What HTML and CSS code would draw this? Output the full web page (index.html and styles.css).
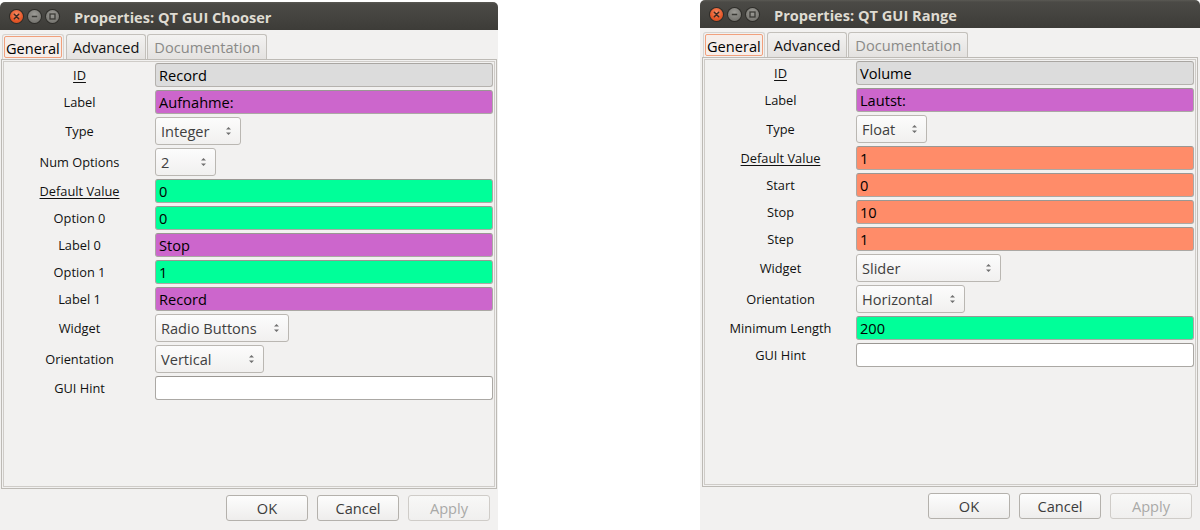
FILE: index.html
```html
<!DOCTYPE html>
<html>
<head>
<meta charset="utf-8">
<link rel="stylesheet" href="styles.css">
</head>
<body>
<div class="desk">
  <div class="win win-left">
    <div class="titlebar">
      <div class="wbtns">
        <span class="wb close"><svg width="13" height="13" viewBox="0 0 13 13"><path d="M4.3 4.3 L8.7 8.7 M8.7 4.3 L4.3 8.7" stroke="#3a2a22" stroke-width="1.5" stroke-linecap="round"/></svg></span>
        <span class="wb min"><svg width="13" height="13" viewBox="0 0 13 13"><path d="M3.8 6.5 H9.2" stroke="#3a3935" stroke-width="1.6"/></svg></span>
        <span class="wb max"><svg width="13" height="13" viewBox="0 0 13 13"><rect x="4" y="4" width="5" height="5" fill="none" stroke="#3a3935" stroke-width="1.3"/></svg></span>
      </div>
      <div class="wtitle">Properties: QT GUI Chooser</div>
    </div>
    <div class="wbody">
      <div class="tabs">
        <div class="tab sel"><span class="tab-focus">General</span></div>
        <div class="tab">Advanced</div>
        <div class="tab dis">Documentation</div>
      </div>
      <div class="panel">
        <div class="panel-in">
          <div class="form">
            <div class="lbl"><u>ID</u></div><div class="field f-id">Record</div>
            <div class="lbl">Label</div><div class="field f-str">Aufnahme:</div>
            <div class="lbl">Type</div><div class="combo w86">Integer<span class="arr"><svg width="7" height="10" viewBox="0 0 7 10"><path d="M1 3.5 L3.5 1 L6 3.5 Z M1 6.5 L3.5 9 L6 6.5 Z" fill="#707070"/></svg></span></div>
            <div class="lbl">Num Options</div><div class="combo w61">2<span class="arr"><svg width="7" height="10" viewBox="0 0 7 10"><path d="M1 3.5 L3.5 1 L6 3.5 Z M1 6.5 L3.5 9 L6 6.5 Z" fill="#707070"/></svg></span></div>
            <div class="lbl"><u>Default Value</u></div><div class="field f-int">0</div>
            <div class="lbl">Option 0</div><div class="field f-int">0</div>
            <div class="lbl">Label 0</div><div class="field f-str">Stop</div>
            <div class="lbl">Option 1</div><div class="field f-int">1</div>
            <div class="lbl">Label 1</div><div class="field f-str">Record</div>
            <div class="lbl">Widget</div><div class="combo w134">Radio Buttons<span class="arr"><svg width="7" height="10" viewBox="0 0 7 10"><path d="M1 3.5 L3.5 1 L6 3.5 Z M1 6.5 L3.5 9 L6 6.5 Z" fill="#707070"/></svg></span></div>
            <div class="lbl">Orientation</div><div class="combo w109">Vertical<span class="arr"><svg width="7" height="10" viewBox="0 0 7 10"><path d="M1 3.5 L3.5 1 L6 3.5 Z M1 6.5 L3.5 9 L6 6.5 Z" fill="#707070"/></svg></span></div>
            <div class="lbl">GUI Hint</div><div class="field f-none"></div>
          </div>
        </div>
      </div>
      <div class="actions">
        <div class="btn">OK</div>
        <div class="btn">Cancel</div>
        <div class="btn dis">Apply</div>
      </div>
    </div>
  </div>

  <div class="win win-right">
    <div class="titlebar">
      <div class="wbtns">
        <span class="wb close"><svg width="13" height="13" viewBox="0 0 13 13"><path d="M4.3 4.3 L8.7 8.7 M8.7 4.3 L4.3 8.7" stroke="#3a2a22" stroke-width="1.5" stroke-linecap="round"/></svg></span>
        <span class="wb min"><svg width="13" height="13" viewBox="0 0 13 13"><path d="M3.8 6.5 H9.2" stroke="#3a3935" stroke-width="1.6"/></svg></span>
        <span class="wb max"><svg width="13" height="13" viewBox="0 0 13 13"><rect x="4" y="4" width="5" height="5" fill="none" stroke="#3a3935" stroke-width="1.3"/></svg></span>
      </div>
      <div class="wtitle">Properties: QT GUI Range</div>
    </div>
    <div class="wbody">
      <div class="tabs">
        <div class="tab sel"><span class="tab-focus">General</span></div>
        <div class="tab">Advanced</div>
        <div class="tab dis">Documentation</div>
      </div>
      <div class="panel">
        <div class="panel-in">
          <div class="form">
            <div class="lbl"><u>ID</u></div><div class="field f-id">Volume</div>
            <div class="lbl">Label</div><div class="field f-str">Lautst:</div>
            <div class="lbl">Type</div><div class="combo w71">Float<span class="arr"><svg width="7" height="10" viewBox="0 0 7 10"><path d="M1 3.5 L3.5 1 L6 3.5 Z M1 6.5 L3.5 9 L6 6.5 Z" fill="#707070"/></svg></span></div>
            <div class="lbl"><u>Default Value</u></div><div class="field f-float">1</div>
            <div class="lbl">Start</div><div class="field f-float">0</div>
            <div class="lbl">Stop</div><div class="field f-float">10</div>
            <div class="lbl">Step</div><div class="field f-float">1</div>
            <div class="lbl">Widget</div><div class="combo w145">Slider<span class="arr"><svg width="7" height="10" viewBox="0 0 7 10"><path d="M1 3.5 L3.5 1 L6 3.5 Z M1 6.5 L3.5 9 L6 6.5 Z" fill="#707070"/></svg></span></div>
            <div class="lbl">Orientation</div><div class="combo w109">Horizontal<span class="arr"><svg width="7" height="10" viewBox="0 0 7 10"><path d="M1 3.5 L3.5 1 L6 3.5 Z M1 6.5 L3.5 9 L6 6.5 Z" fill="#707070"/></svg></span></div>
            <div class="lbl">Minimum Length</div><div class="field f-int">200</div>
            <div class="lbl">GUI Hint</div><div class="field f-none"></div>
          </div>
        </div>
      </div>
      <div class="actions">
        <div class="btn">OK</div>
        <div class="btn">Cancel</div>
        <div class="btn dis">Apply</div>
      </div>
    </div>
  </div>
</div>
</body>
</html>
```

FILE: styles.css
```css
* { box-sizing: border-box; margin: 0; padding: 0; }
html, body { width: 1200px; height: 530px; overflow: hidden; background: #ffffff; }
body { font-family: "Open Sans", "DejaVu Sans", sans-serif; color: #000; }

.desk { display: flex; align-items: flex-start; gap: 202px; height: 530px; }

.win { background: #f2f1f0; display: flex; flex-direction: column; border-radius: 5px 5px 0 0; overflow: hidden; }
.win-left { width: 498px; height: 528px; margin-top: 2px; }
.win-right { width: 500px; height: 530px; }

.titlebar {
  height: 28px; flex: none; display: flex; align-items: center;
  background: linear-gradient(to bottom, #5a5954 0, #4b4a46 2px, #3d3c38 100%);
  padding-left: 10px;
}
.wbtns { display: flex; gap: 5px; width: 64px; flex: none; }
.wb { width: 13px; height: 13px; border-radius: 50%; display: block; }
.wb svg { display: block; }
.close { background: radial-gradient(circle at 50% 35%, #f7906a 0, #e8592a 55%, #c9461a 100%); box-shadow: 0 0 0 1px #2d2c28; }
.min, .max { background: radial-gradient(circle at 50% 35%, #9c9b96 0, #807f7a 55%, #6b6a65 100%); box-shadow: 0 0 0 1px #2d2c28; }
.wtitle { color: #dfdbd2; font-weight: 700; font-size: 14.6px; line-height: 28px; white-space: nowrap; padding-top: 1px; }

.wbody { display: flex; flex-direction: column; padding: 4px 0 0 1px; flex: 1; }
.win-right .wbody { padding-left: 2px; }

.tabs { display: flex; height: 25px; padding-left: 1px; align-items: stretch; }
.tab {
  height: 25px; padding: 1px 6px 0; font-size: 14.6px; line-height: 23px; color: #111;
  border: 1px solid #c3c0bb; border-bottom: none; border-radius: 3px 3px 0 0;
  background: linear-gradient(to bottom, #f3f2f1, #e4e2e0);
  margin-right: 1px; white-space: nowrap;
}
.tab.dis { color: #8a8a88; }
.tab.sel { padding: 1px 1px 0 1px; background: #f2f1f0; border-color: #d6d3cf; margin-right: 2px; }
.tab-focus {
  display: block; height: 22px; line-height: 21px; padding: 1px 1px 0;
  border: 1px solid #f1a07c; border-radius: 2px; background: #f6eeea; color: #000;
}

.panel { width: 496px; height: 430px; flex: none; border: 1px solid #bdbab5; padding: 1px; }
.panel-in { height: 100%; border: 1px solid #cfccc8; }

.form {
  display: grid; grid-template-columns: 151px 338px; row-gap: 3px;
  padding-top: 1px; align-items: center;
}
.lbl { font-size: 12.8px; color: #111; text-align: center; white-space: nowrap; line-height: 16px; }
.lbl u { text-decoration-thickness: 1px; text-underline-offset: 2px; }

.field {
  height: 24px; border: 1px solid #aba8a4; border-top-color: #9a9793; border-radius: 3px;
  padding: 1px 0 0 3px; font-size: 14.6px; line-height: 21px; color: #000; white-space: nowrap;
  overflow: hidden;
}
.f-id { background: #dcdcdc; border-color: #b5b2ae; border-top-color: #a9a6a2; }
.f-str { background: #cc66cc; }
.f-int { background: #00ff99; }
.f-float { background: #ff8c69; }
.f-none { background: #ffffff; }

.combo {
  position: relative; height: 28px; border: 1px solid #bab7b2; border-radius: 3px;
  background: linear-gradient(to bottom, #fcfcfc, #f1f0ef);
  padding: 1px 0 0 5px; font-size: 14.6px; line-height: 25px; color: #3f3f3f; white-space: nowrap;
  justify-self: start;
}
.combo .arr { position: absolute; right: 8px; top: 8px; width: 7px; height: 10px; }
.combo .arr svg { display: block; }
.w61 { width: 61px; } .w71 { width: 71px; } .w86 { width: 86px; }
.w109 { width: 109px; } .w134 { width: 134px; } .w145 { width: 145px; }

.actions { display: flex; justify-content: flex-end; gap: 9px; margin-top: 6px; padding-right: 8px; }
.btn {
  width: 82px; height: 26px; border: 1px solid #b4b1ac; border-radius: 3px;
  background: linear-gradient(to bottom, #fdfdfd, #eeedec);
  padding-top: 1px; font-size: 14.6px; line-height: 23px; text-align: center; color: #3c3c3c;
}
.btn.dis { color: #a9a9a7; border-color: #cfccc8; background: linear-gradient(to bottom, #f8f8f7, #f0efee); }
```
